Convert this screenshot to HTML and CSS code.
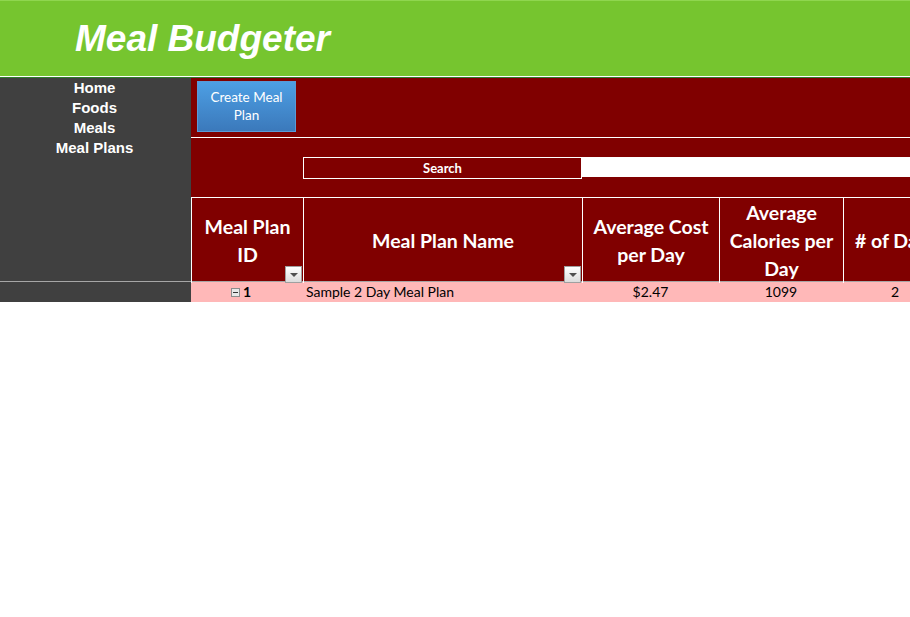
FILE: index.html
```html
<!DOCTYPE html>
<html lang="en">
<head>
<meta charset="utf-8">
<title>Meal Budgeter</title>
<link rel="stylesheet" href="styles.css">
</head>
<body>
<header class="banner">
  <h1 class="title">Meal Budgeter</h1>
</header>
<div class="app">
  <aside class="sidebar">
    <nav class="nav">
      <a class="nav-link">Home</a>
      <a class="nav-link">Foods</a>
      <a class="nav-link">Meals</a>
      <a class="nav-link">Meal Plans</a>
    </nav>
    <div class="side-foot"></div>
  </aside>
  <main class="main">
    <div class="toolbar">
      <button class="btn">Create Meal<br>Plan</button>
    </div>
    <div class="search-area">
      <div class="search-row">
        <div class="search-label">Search</div>
        <div class="search-input"></div>
      </div>
    </div>
    <div class="table">
      <div class="thead">
        <div class="th"><span>Meal Plan<br>ID</span><span class="dd"></span></div>
        <div class="th"><span>Meal Plan Name</span><span class="dd"></span></div>
        <div class="th"><span>Average Cost<br>per Day</span></div>
        <div class="th"><span>Average<br>Calories per<br>Day</span></div>
        <div class="th"><span># of Days</span></div>
      </div>
      <div class="trow">
        <div class="td td-id"><span class="minus"></span>1</div>
        <div class="td td-name">Sample 2 Day Meal Plan</div>
        <div class="td td-c">$2.47</div>
        <div class="td td-c">1099</div>
        <div class="td td-c">2</div>
      </div>
    </div>
  </main>
</div>
</body>
</html>
```
FILE: styles.css
```css
* { box-sizing: border-box; }
html, body { margin: 0; padding: 0; background: #ffffff; }
body { width: 910px; overflow: hidden; font-family: "Lato", "Liberation Sans", sans-serif; }

.banner {
  height: 78px;
  background: #76c52f;
  border-top: 1px solid #8fd64f;
  border-bottom: 1px solid #2f7d2f;
  box-shadow: inset 0 -1px 0 #ffffff;
  padding-left: 75px;
  display: flex;
  align-items: center;
}
.title {
  margin: 0;
  padding-bottom: 2px;
  font-family: "Liberation Sans", Arial, sans-serif;
  font-weight: bold;
  font-style: italic;
  font-size: 37px;
  color: #ffffff;
  line-height: 1;
}

.app {
  display: grid;
  grid-template-columns: 191px 719px;
}

.sidebar {
  background: #404040;
  display: flex;
  flex-direction: column;
}
.nav {
  flex: 1;
  display: flex;
  flex-direction: column;
  align-items: center;
  padding-right: 2px;
}
.nav-link {
  font-family: "Liberation Sans", Arial, sans-serif;
  font-weight: bold;
  font-size: 15px;
  line-height: 20px;
  color: #ffffff;
}
.side-foot {
  height: 21px;
  border-top: 1px solid #a6a6a6;
}

.main {
  background: #800000;
  overflow: hidden;
}
.toolbar {
  height: 60px;
  padding: 3px 0 0 6px;
  border-bottom: 1px solid #ffffff;
}
.btn {
  width: 99px;
  height: 51px;
  margin: 0;
  padding: 0 0 2px 0;
  border: 1px solid #5a9ad6;
  background: linear-gradient(#4d9fe4, #3b79bb);
  color: #ffffff;
  font-family: "Lato", sans-serif;
  font-size: 13.5px;
  line-height: 18px;
  text-align: center;
}

.search-area {
  height: 59px;
  padding-top: 19px;
}
.search-row {
  display: grid;
  grid-template-columns: 112px 279px 1fr;
  height: 21px;
}
.search-label {
  grid-column: 2;
  border: 1px solid #ffffff;
  color: #ffffff;
  font-weight: bold;
  font-size: 13px;
  line-height: 20px;
  text-align: center;
}
.search-input {
  background: #ffffff;
  height: 20px;
}

.table { width: 756px; }
.thead {
  display: grid;
  grid-template-columns: 112px 279px 137px 124px 104px;
  height: 85px;
  border-top: 1px solid #ffffff;
  border-bottom: 1px solid #a6a6a6;
}
.th {
  position: relative;
  border-left: 1px solid #ffffff;
  display: flex;
  align-items: center;
  justify-content: center;
  text-align: center;
  color: #ffffff;
  font-weight: bold;
  font-size: 19.5px;
  line-height: 28px;
  padding-top: 1px;
}
.dd {
  position: absolute;
  right: 1px;
  bottom: 0px;
  width: 17px;
  height: 17px;
  border: 1px solid #a0a0a0;
  background: linear-gradient(#ffffff, #dcdcdc);
}
.dd::after {
  content: "";
  position: absolute;
  left: 4px;
  top: 6px;
  border-left: 4px solid transparent;
  border-right: 4px solid transparent;
  border-top: 4px solid #505050;
}

.trow {
  display: grid;
  grid-template-columns: 112px 279px 137px 124px 104px;
  height: 20px;
  background: #ffb8b8;
}
.td {
  font-size: 14px;
  line-height: 20px;
  color: #000000;
  white-space: nowrap;
}
.td-id {
  display: flex;
  align-items: center;
  justify-content: center;
  font-weight: bold;
  gap: 3px;
  padding-right: 12px;
}
.minus {
  width: 9px;
  height: 9px;
  border: 1px solid #8c8c8c;
  background: #e8e8e8;
  position: relative;
}
.minus::after {
  content: "";
  position: absolute;
  left: 1px;
  right: 1px;
  top: 3px;
  height: 1px;
  background: #333333;
}
.td-name { padding-left: 3px; }
.td-c { text-align: center; }
```
